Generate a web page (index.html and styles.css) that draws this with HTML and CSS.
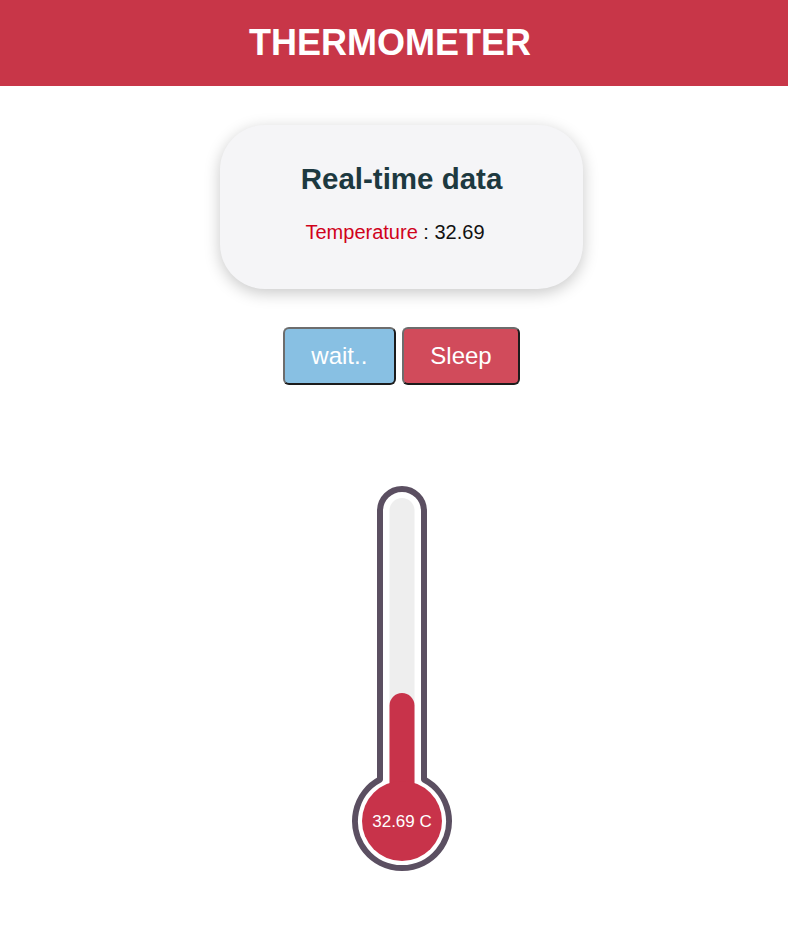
FILE: index.html
```html
<!DOCTYPE html>
<html>
<head>
<meta charset="utf-8">
<title>Thermometer</title>
<link rel="stylesheet" href="styles.css">
</head>
<body>
<header class="topbar">
  <h1 class="title">THERMOMETER</h1>
</header>
<main class="content">
  <section class="card">
    <h2 class="card-title">Real-time data</h2>
    <p class="reading"><span class="label">Temperature</span> : 32.69</p>
  </section>
  <div class="actions">
    <button class="btn btn-wait">wait..</button>
    <button class="btn btn-sleep">Sleep</button>
  </div>
  <svg class="thermo" width="120" height="400" viewBox="0 0 120 400">
    <path d="M 38 31 A 22 22 0 0 1 82 31 L 82 299.5 A 47 47 0 1 1 38 299.5 Z" fill="#ffffff" stroke="#5b4f61" stroke-width="6" stroke-linejoin="round"/>
    <rect x="47.5" y="18" width="25" height="322" rx="12.5" fill="#eeeeee"/>
    <rect x="47.5" y="213" width="25" height="130" rx="12.5" fill="#c8334a"/>
    <circle cx="60" cy="341" r="40" fill="#c8334a"/>
    <text x="60" y="347" text-anchor="middle" class="thermo-text">32.69 C</text>
  </svg>
</main>
</body>
</html>
```

FILE: styles.css
```css
* { box-sizing: border-box; }
html, body {
  margin: 0;
  padding: 0;
  background: #ffffff;
  font-family: "Liberation Sans", Arial, sans-serif;
}
.topbar {
  background: #c83648;
  height: 86px;
  padding-right: 8px;
  text-align: center;
}
.title {
  margin: 0;
  color: #ffffff;
  font-size: 36px;
  font-weight: bold;
  line-height: 86px;
}
.content {
  display: flex;
  flex-direction: column;
  align-items: center;
  padding-left: 15px;
}
.card {
  margin-top: 39px;
  width: 363px;
  height: 164px;
  padding-top: 38px;
  background: #f5f5f7;
  border-radius: 45px;
  box-shadow: 0 4px 16px rgba(0, 0, 0, 0.22);
  text-align: center;
}
.card-title {
  margin: 0;
  font-size: 29.5px;
  line-height: 32px;
  font-weight: bold;
  color: #1d3940;
}
.reading {
  margin: 25px 0 0;
  padding-right: 13px;
  font-size: 20px;
  line-height: 24px;
  color: #111111;
}
.label { color: #d0021b; }
.actions {
  margin-top: 38px;
  display: flex;
  gap: 6px;
}
.btn {
  font-family: "Liberation Sans", Arial, sans-serif;
  font-size: 24px;
  line-height: 28px;
  color: #ffffff;
  padding: 13px 26.5px;
  border: 2px solid;
  border-color: #6d6d6d #1c1c1c #1c1c1c #6d6d6d;
  border-radius: 6px;
}
.btn-wait { background: #88c0e3; }
.btn-sleep { background: #d14b5b; }
.thermo {
  display: block;
  margin-top: 95px;
}
.thermo-text {
  font-family: "Liberation Sans", Arial, sans-serif;
  font-size: 17px;
  fill: #ffffff;
}
```
